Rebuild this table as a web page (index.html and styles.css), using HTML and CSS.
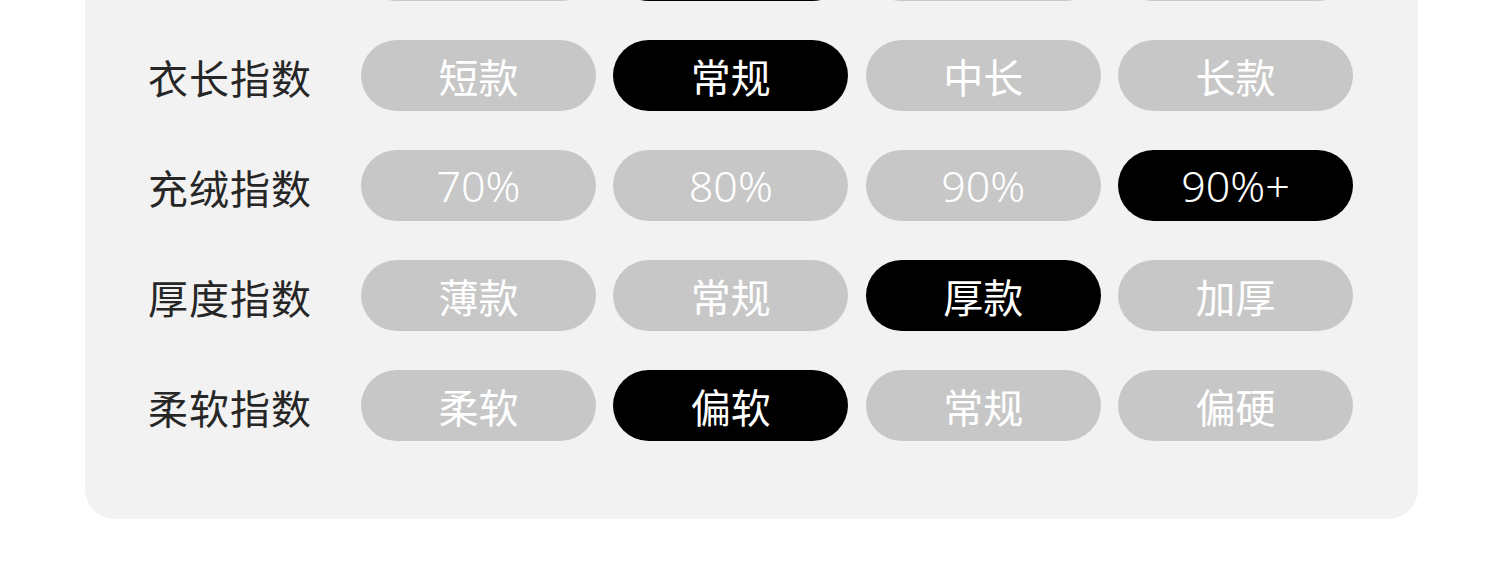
FILE: index.html
```html
<!DOCTYPE html>
<html lang="zh-CN">
<head>
<meta charset="utf-8">
<title>指数</title>
<link rel="stylesheet" href="styles.css">
</head>
<body>
<div class="page">
  <div class="card">
    <div class="row" aria-hidden="true">
      <div class="label"></div>
      <div class="opts">
        <span class="pill"></span>
        <span class="pill on"></span>
        <span class="pill"></span>
        <span class="pill"></span>
      </div>
    </div>
    <div class="row">
      <div class="label">衣长指数</div>
      <div class="opts">
        <span class="pill">短款</span>
        <span class="pill on">常规</span>
        <span class="pill">中长</span>
        <span class="pill">长款</span>
      </div>
    </div>
    <div class="row">
      <div class="label">充绒指数</div>
      <div class="opts">
        <span class="pill num">70%</span>
        <span class="pill num">80%</span>
        <span class="pill num">90%</span>
        <span class="pill num on">90%+</span>
      </div>
    </div>
    <div class="row">
      <div class="label">厚度指数</div>
      <div class="opts">
        <span class="pill">薄款</span>
        <span class="pill">常规</span>
        <span class="pill on">厚款</span>
        <span class="pill">加厚</span>
      </div>
    </div>
    <div class="row">
      <div class="label">柔软指数</div>
      <div class="opts">
        <span class="pill">柔软</span>
        <span class="pill on">偏软</span>
        <span class="pill">常规</span>
        <span class="pill">偏硬</span>
      </div>
    </div>
  </div>
</div>
</body>
</html>
```

FILE: styles.css
```css
html, body {
  margin: 0;
  padding: 0;
  background: #ffffff;
  overflow: hidden;
}
.page {
  padding: 0 82px 0 85px;
  font-family: "Noto Sans CJK SC", "Noto Sans", sans-serif;
}
.card {
  background: #f2f2f2;
  border-radius: 0 0 30px 30px;
  margin-top: -109px;
  padding: 39px 65px 78px 63px;
  display: flex;
  flex-direction: column;
  gap: 39px;
}
.row {
  display: flex;
  align-items: center;
  height: 71px;
}
.label {
  width: 213px;
  flex: none;
  font-size: 40px;
  color: #262626;
  letter-spacing: 1px;
  line-height: 1;
  margin-top: 2px;
}
.opts {
  flex: 1;
  display: grid;
  grid-template-columns: repeat(4, 1fr);
  column-gap: 17.5px;
}
.pill {
  height: 71px;
  border-radius: 36px;
  background: #c7c7c7;
  color: #ffffff;
  font-size: 40px;
  line-height: 1;
  display: flex;
  align-items: center;
  justify-content: center;
}
.pill.on {
  background: #000000;
}
.pill.num {
  font-family: "Noto Sans", "Noto Sans CJK SC", sans-serif;
  font-weight: 300;
  font-size: 43px;
}
```
